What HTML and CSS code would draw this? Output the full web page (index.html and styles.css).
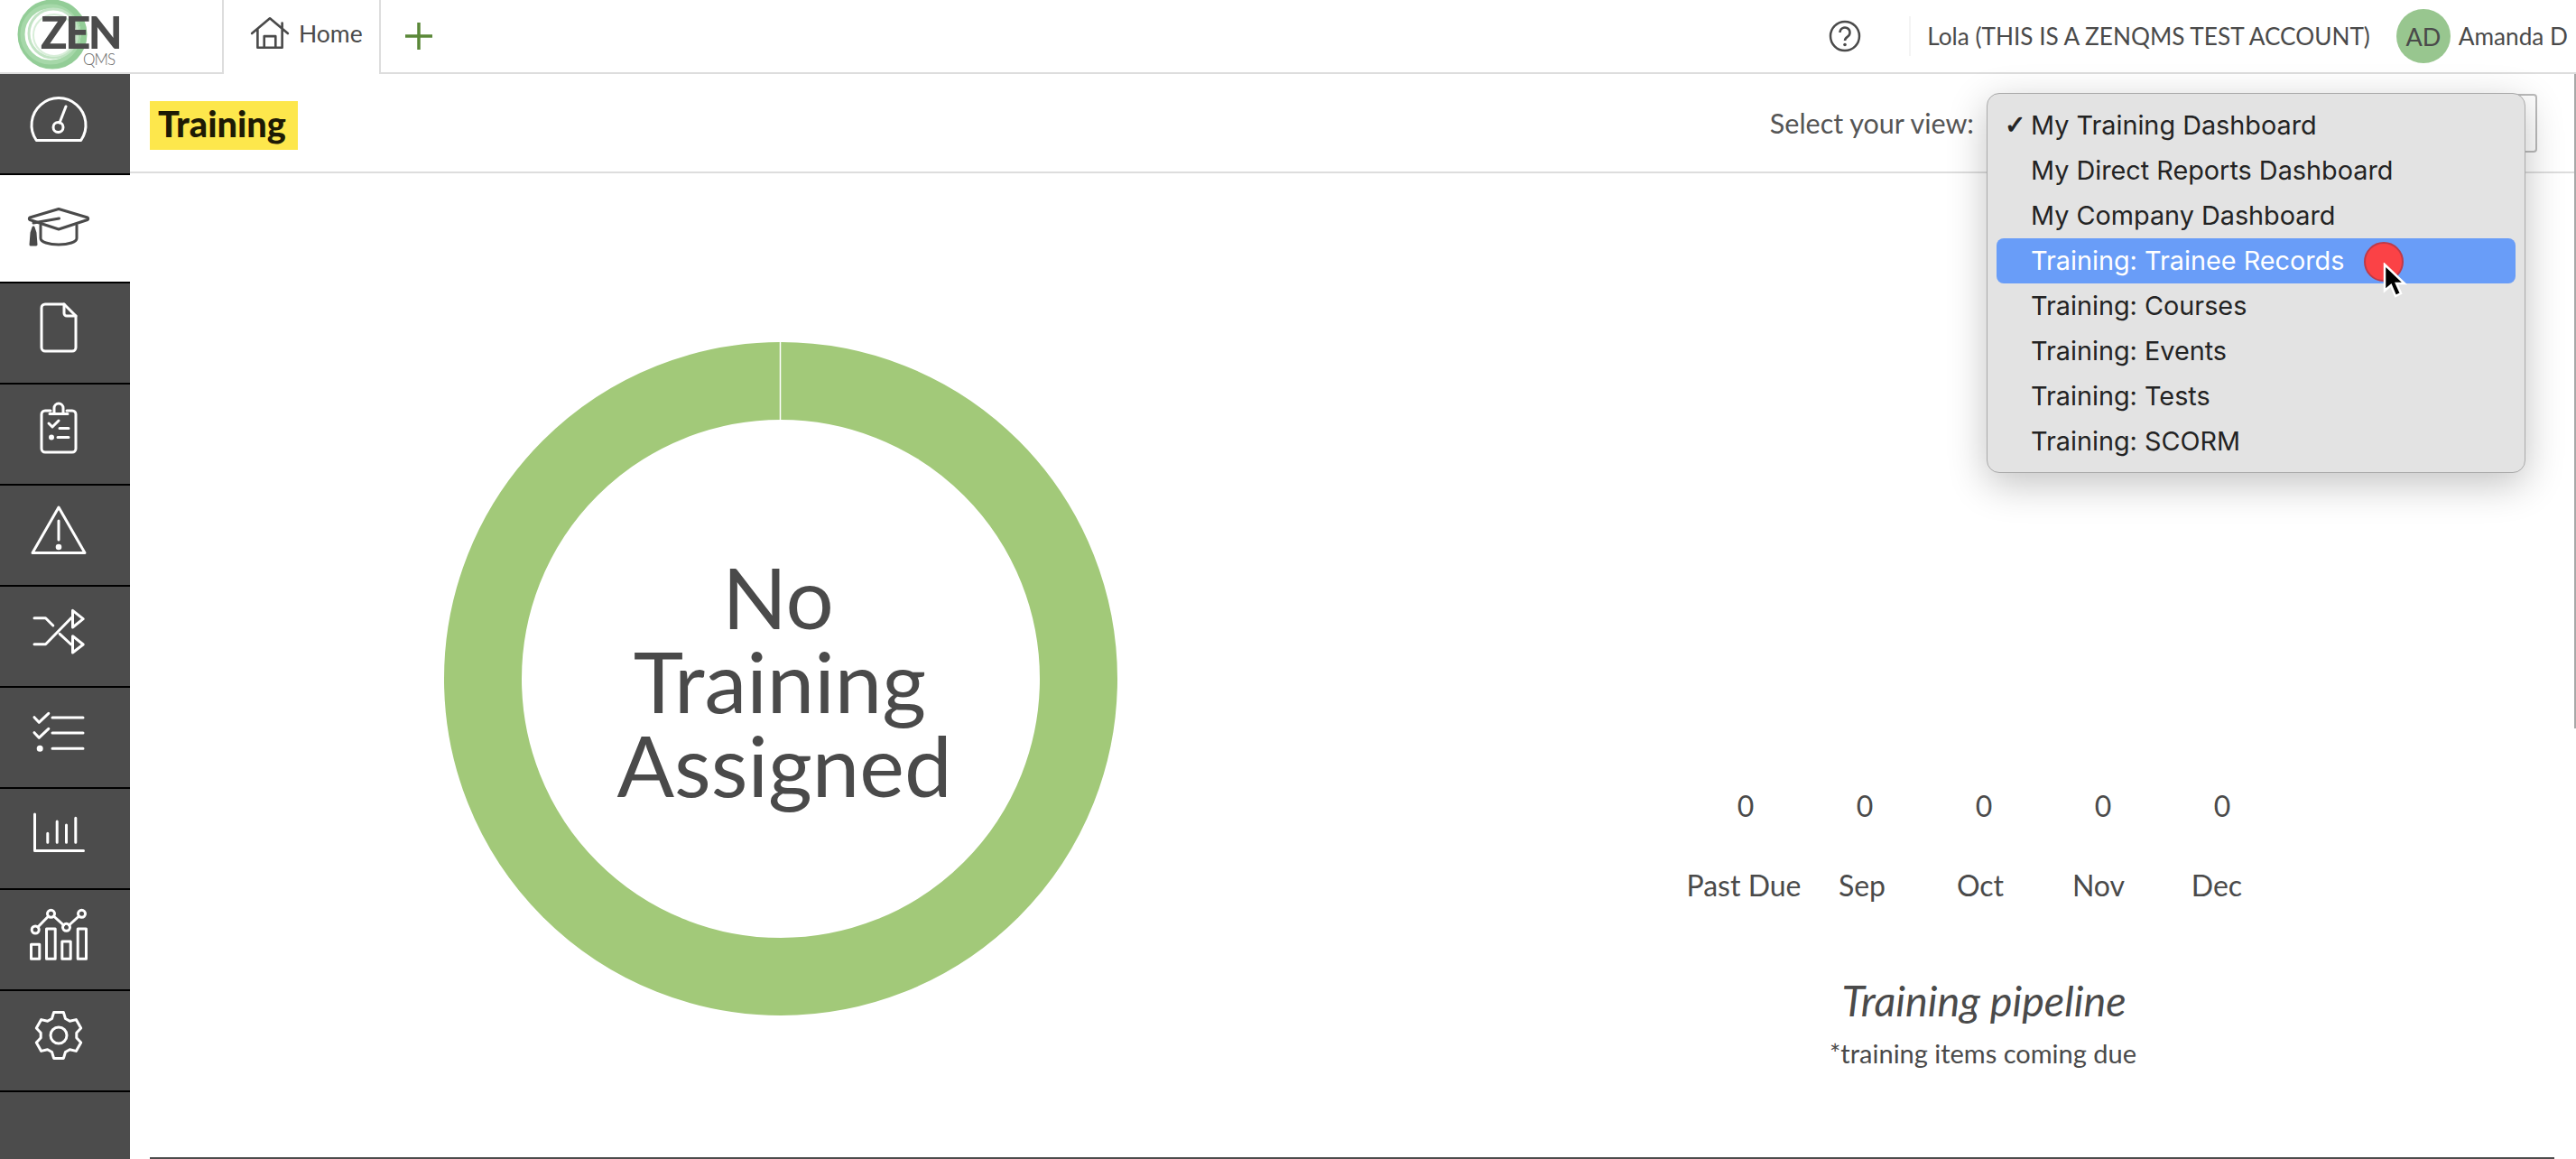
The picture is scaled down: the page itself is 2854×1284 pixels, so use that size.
FILE: index.html
```html
<!doctype html>
<html lang="en">

<head>
    <meta charset="utf-8">
    <title>ZenQMS Training</title>
    <link rel="stylesheet" href="styles.css">
</head>

<body>
    <header class="topbar">
        <div class="logo-cell">
            <div class="logo">
                <svg class="logo-ring" width="100" height="80" viewBox="0 0 100 80">
                    <circle cx="58" cy="38" r="35" fill="none" stroke="#93cd97" stroke-width="7"/>
                    <circle cx="56" cy="38" r="31" fill="none" stroke="#a6d8a9" stroke-width="5"/>
                    <circle cx="59" cy="37" r="27" fill="none" stroke="#c2e3c4" stroke-width="3"/>
                    <circle cx="60" cy="39" r="23" fill="none" stroke="#d8eed9" stroke-width="2"/>
                </svg>
                <span class="logo-zen">ZEN</span>
                <span class="logo-qms">QMS</span>
            </div>
        </div>
        <div class="home-tab">
            <svg width="44" height="40" viewBox="0 0 42 38" class="home-icon">
                <path d="M2 19 21 3l19 16M34 8v6M8 15v19h26V15M15 34V22h12v12"/>
            </svg>
            <span>Home</span>
        </div>
        <div class="top-rest">
            <button class="add-tab">
                <svg width="30" height="30" viewBox="0 0 30 30"><path d="M15 0v30M0 15h30"/></svg>
            </button>
            <div class="top-right">
                <svg class="help-icon" width="36" height="36" viewBox="0 0 36 36">
                    <circle cx="18" cy="18" r="16"/>
                    <path d="M12.500 14a5.500 5.500 0 1 1 8.500 4.600c-2 1.300-3 2.200-3 4.400"/>
                    <circle class="help-dot" cx="18" cy="27.500" r="1.800"/>
                </svg>
                <div class="top-divider"></div>
                <span class="account-name">Lola (THIS IS A ZENQMS TEST ACCOUNT)</span>
                <span class="avatar">AD</span>
                <span class="user-name">Amanda D</span>
            </div>
        </div>
    </header>

    <div class="page">
        <nav class="sidebar">
            <a class="nav-item">
                <svg class="nav-icon" viewBox="0 0 72 72">
                    <path d="M11.300 60.500A30 30 0 1 1 60.700 60.500Z"/>
                    <circle cx="35.500" cy="46" r="5.500"/>
                    <path d="M37 41l7-18"/>
                </svg>
            </a>
            <a class="nav-item active">
                <svg class="nav-icon" viewBox="0 0 72 72">
                    <path d="M36 16.500 68 26a1.500 1.500 0 0 1 0 2.500L36 39 4 28.500a1.500 1.500 0 0 1 0-2.500Z"/>
                    <path d="M16 34.500V49c0 4 9 7 20 7s20-3 20-7V34.500"/>
                    <path d="M8 32l28.500-5"/>
                    <path class="solid" d="M8 37l2 6 1 13H5l1-13Z"/>
                </svg>
            </a>
            <a class="nav-item">
                <svg class="nav-icon" viewBox="0 0 72 72">
                    <path d="M21 10h21l13 13v35a4 4 0 0 1-4 4H21a4 4 0 0 1-4-4V14a4 4 0 0 1 4-4Z"/>
                    <path d="M42 10v10a3 3 0 0 0 3 3h10"/>
                </svg>
            </a>
            <a class="nav-item">
                <svg class="nav-icon" viewBox="0 0 72 72">
                    <path d="M27 16h-6a4 4 0 0 0-4 4v38a4 4 0 0 0 4 4h30a4 4 0 0 0 4-4V20a4 4 0 0 0-4-4h-6"/>
                    <path d="M26 19.500h20M31 19v-6a5 5 0 0 1 10 0v6"/>
                    <path d="M25 30l4 4 7-7M37 35.500h10M35 45.500h12"/>
                    <circle class="solid" cx="28" cy="45.500" r="1.500"/>
                </svg>
            </a>
            <a class="nav-item">
                <svg class="nav-icon" viewBox="0 0 72 72">
                    <path d="M36 11 65 61.500H7Z"/>
                    <path d="M36 26v21"/>
                    <circle class="solid" cx="36" cy="55" r="1.800"/>
                </svg>
            </a>
            <a class="nav-item">
                <svg class="nav-icon" viewBox="0 0 72 72">
                    <path d="M9 21.700h12.500l8.300 8.300M9 50.700h12.500l28.300-29M37.200 39.300 49.800 51"/>
                    <path d="M51.500 13.300 63.200 22.700 51.500 32Z"/>
                    <path d="M51.500 41.700 63.200 51 51.500 60Z"/>
                </svg>
            </a>
            <a class="nav-item">
                <svg class="nav-icon" viewBox="0 0 72 72">
                    <path d="M29 20h34M29 37h34M29 54.300h34"/>
                    <path d="M9 19.700l5.200 5.600 10.600-10M9 36.700l5.200 5.600 10.600-10"/>
                    <circle class="solid" cx="15.200" cy="54.300" r="2"/>
                </svg>
            </a>
            <a class="nav-item">
                <svg class="nav-icon" viewBox="0 0 72 72">
                    <path d="M9.500 15v40.500h54"/>
                    <path d="M23.800 46.300v-10M34.200 46.300V23M44.500 46.300V27M54.800 46.300V19.300"/>
                </svg>
            </a>
            <a class="nav-item">
                <svg class="nav-icon" viewBox="0 0 72 72">
                    <path d="M5.500 47.300h9.300v16H5.500ZM22.500 30h9.700v33.300h-9.700ZM39.800 44h9.400v19.300h-9.400ZM57.200 30h9.300v33.300h-9.300Z"/>
                    <path d="M13 28l11.700-12M30.500 16l11 10M47.500 26l11-10"/>
                    <circle cx="10.200" cy="31" r="4"/>
                    <circle cx="27.500" cy="13.300" r="4"/>
                    <circle cx="44.500" cy="28.300" r="4"/>
                    <circle cx="61.500" cy="13.300" r="4"/>
                </svg>
            </a>
            <a class="nav-item">
                <svg class="nav-icon" viewBox="0 0 72 72">
                    <path d="M28.500 17.500 30.600 10.600H41.400L43.500 17.500 48.300 20.200 55.300 18.600 60.700 28 55.800 33.200V38.800L60.700 44 55.300 53.400 48.300 51.800 43.500 54.500 41.400 61.400H30.600L28.500 54.500 23.700 51.800 16.700 53.400 11.300 44 16.200 38.800V33.200L11.300 28 16.700 18.600 23.700 20.200Z"/>
                    <circle cx="36" cy="36" r="9"/>
                </svg>
            </a>
            <div class="nav-fill"></div>
        </nav>

        <main class="content">
            <div class="content-head">
                <h1 class="page-title">Training</h1>
                <div class="view-picker">
                    <label class="view-label">Select your view:</label>
                    <div class="view-select"></div>
                </div>
            </div>

            <div class="dashboard">
                <section class="donut-panel">
                    <div class="donut">
                        <svg width="746" height="746" viewBox="0 0 746 746">
                            <circle class="donut-ring" cx="373" cy="373" r="330"/>
                            <path class="donut-gap" d="M372.500 0v86"/>
                        </svg>
                        <div class="donut-text">
                            <div class="line-no">No</div>
                            <div class="line-training">Training</div>
                            <div class="line-assigned">Assigned</div>
                        </div>
                    </div>
                </section>

                <section class="pipeline">
                    <div class="pipeline-counts">
                        <span>0</span><span>0</span><span>0</span><span>0</span><span>0</span>
                    </div>
                    <div class="pipeline-labels">
                        <span>Past Due</span><span>Sep</span><span>Oct</span><span>Nov</span><span>Dec</span>
                    </div>
                    <h2 class="pipeline-title">Training pipeline</h2>
                    <p class="pipeline-note">*training items coming due</p>
                </section>
            </div>

            <div class="bottom-rule"></div>
        </main>
        <div class="scroll-track"><div class="scroll-thumb"></div></div>
    </div>

    <!-- open native select menu -->
    <ul class="view-menu">
        <li class="checked">My Training Dashboard</li>
        <li>My Direct Reports Dashboard</li>
        <li>My Company Dashboard</li>
        <li class="hover">Training: Trainee Records</li>
        <li>Training: Courses</li>
        <li>Training: Events</li>
        <li>Training: Tests</li>
        <li>Training: SCORM</li>
    </ul>
    <div class="click-dot"></div>
    <svg class="cursor" width="30" height="42" viewBox="0 0 30 42">
        <path d="M3 2v29l7-6 5 12 6-3-5-11h9Z"/>
    </svg>
</body>

</html>
```

FILE: styles.css
```css
* {
    box-sizing: border-box;
}

html,
body {
    margin: 0;
    height: 1284px;
    overflow: hidden;
}

body {
    position: relative;
    font-family: "Lato", "Liberation Sans", sans-serif;
    color: #4a4a4a;
    background: #fff;
}

/* top bar */
.topbar {
    display: flex;
    height: 82px;
}

.logo-cell {
    width: 246px;
    border-bottom: 2px solid #ddd;
}

.logo {
    position: relative;
    width: 140px;
    height: 80px;
    overflow: hidden;
}

.logo-ring {
    position: absolute;
    left: 0;
    top: 0;
}

.logo-zen {
    position: absolute;
    left: 45px;
    top: 17px;
    font-size: 49px;
    line-height: 36px;
    font-weight: 900;
    letter-spacing: -2.500px;
    color: #4c4c4c;
}

.logo-qms {
    position: absolute;
    left: 92px;
    top: 59px;
    font-size: 17px;
    line-height: 14px;
    font-weight: 300;
    letter-spacing: -1px;
    color: #666;
}

.home-tab {
    display: flex;
    align-items: center;
    width: 176px;
    padding: 0 0 8px 29px;
    gap: 10px;
    border-left: 2px solid #ddd;
    border-right: 2px solid #ddd;
    font-size: 26.500px;
}

.home-icon path {
    fill: none;
    stroke: #4a4a4a;
    stroke-width: 2.500;
    stroke-linejoin: round;
    stroke-linecap: round;
}

.top-rest {
    flex: 1;
    display: flex;
    align-items: center;
    justify-content: space-between;
    border-bottom: 2px solid #ddd;
}

.add-tab {
    padding: 0;
    margin-left: 27px;
    border: 0;
    background: none;
    display: flex;
}

.add-tab path {
    fill: none;
    stroke: #5a8838;
    stroke-width: 3.500;
}

.top-right {
    display: flex;
    align-items: center;
    padding-right: 9px;
    font-size: 26.200px;
}

.help-icon {
    margin-right: 53px;
}

.help-icon circle,
.help-icon path {
    fill: none;
    stroke: #4a4a4a;
    stroke-width: 2.500;
}

.help-icon .help-dot {
    fill: #4a4a4a;
    stroke: none;
}

.top-divider {
    width: 2px;
    height: 44px;
    background: #f4f4f4;
    margin-right: 18px;
}

.avatar {
    display: flex;
    align-items: center;
    justify-content: center;
    width: 60px;
    height: 60px;
    margin: 0 9px 0 29px;
    border-radius: 50%;
    background: #98c68f;
    font-size: 27px;
}

/* left navigation */
.page {
    display: flex;
    height: 1202px;
}

.sidebar {
    width: 144px;
    display: flex;
    flex-direction: column;
    flex-shrink: 0;
}

.nav-item {
    height: 112px;
    display: flex;
    align-items: center;
    justify-content: center;
    padding: 0 15px 12px 0;
    background: #4c4c4c;
    border-bottom: 2px solid #000;
}

.nav-item.active {
    height: 120px;
    padding-bottom: 4px;
    background: #fff;
}

.nav-fill {
    flex: 1;
    background: #4c4c4c;
}

.nav-icon {
    width: 72px;
    height: 72px;
    fill: none;
    stroke: #fff;
    stroke-width: 3;
    stroke-linejoin: round;
    stroke-linecap: round;
}

.nav-icon .solid {
    fill: #fff;
}

.active .nav-icon {
    stroke: #4a4a4a;
}

.active .nav-icon .solid {
    fill: #4a4a4a;
}

/* content */
.content {
    flex: 1;
    display: flex;
    flex-direction: column;
    min-width: 0;
}

.content-head {
    display: flex;
    align-items: center;
    justify-content: space-between;
    height: 110px;
    padding: 0 41px 0 22px;
    border-bottom: 2px solid #ddd;
}

.page-title {
    margin: 6px 0 0;
    padding: 0 13px 0 9px;
    height: 54px;
    line-height: 50px;
    font-size: 39.700px;
    font-weight: 900;
    color: #1d1a05;
    background: #fde74c;
}

.view-picker {
    display: flex;
    align-items: center;
    gap: 22px;
}

.view-label {
    font-size: 30.500px;
    color: #555;
}

.view-select {
    width: 602px;
    height: 65px;
    border: 2px solid #bbb;
    border-radius: 4px;
}

.dashboard {
    flex: 1;
    display: grid;
    grid-template-columns: 1442px 1224px;
}

.donut-panel {
    padding-top: 187px;
    display: flex;
    justify-content: center;
}

.donut {
    display: grid;
    place-items: center;
    width: 746px;
    height: 746px;
}

.donut svg,
.donut-text {
    grid-area: 1 / 1;
}

.donut-ring {
    fill: none;
    stroke: #a2c979;
    stroke-width: 86;
}

.donut-gap {
    fill: none;
    stroke: #fff;
    stroke-width: 1.500;
}

.donut-text {
    width: 560px;
    padding-top: 2px;
    font-size: 94px;
    line-height: 93px;
    text-align: center;
}

.line-no {
    padding-right: 6px;
}

.line-training {
    padding-right: 2px;
}

.line-assigned {
    padding-left: 8px;
}

.pipeline {
    padding-top: 681px;
    text-align: center;
}

.pipeline-counts,
.pipeline-labels {
    display: flex;
    justify-content: center;
    font-size: 32px;
    line-height: 40px;
}

.pipeline-counts span {
    width: 132px;
}

.pipeline-labels {
    margin-top: 48px;
    padding-right: 8px;
}

.pipeline-labels span {
    width: 131px;
}

.pipeline-title {
    margin: 79px 0 0;
    font-size: 46.700px;
    line-height: 56px;
    font-style: italic;
    font-weight: 400;
}

.pipeline-note {
    margin: 13px 2px 0 0;
    font-size: 29px;
    line-height: 36px;
}

.bottom-rule {
    height: 2px;
    margin: 0 22px;
    background: #4c4c4c;
}

.scroll-track {
    width: 2px;
    flex-shrink: 0;
}

.scroll-thumb {
    height: 725px;
    background: #a8a8a8;
}

/* native select menu, cursor */
.view-menu {
    position: absolute;
    left: 2201px;
    top: 103px;
    width: 597px;
    height: 421px;
    margin: 0;
    padding: 10px 10px 0;
    list-style: none;
    font-family: "Inter", "Liberation Sans", sans-serif;
    font-size: 28.800px;
    color: #232323;
    background: #e3e3e3;
    border: 1px solid #aaa;
    border-radius: 14px;
    box-shadow: 0 12px 44px rgba(0, 0, 0, .24);
}

.view-menu li {
    height: 50px;
    line-height: 50px;
    padding-left: 38px;
    border-radius: 8px;
}

.view-menu .checked {
    position: relative;
}

.view-menu .checked::before {
    content: "\2713";
    position: absolute;
    left: 9px;
    font-family: "DejaVu Sans", sans-serif;
    font-size: 28px;
    font-weight: 700;
    -webkit-text-stroke: 1px #232323;
}

.view-menu .hover {
    color: #fff;
    background: #699df8;
}

.click-dot {
    position: absolute;
    left: 2619px;
    top: 268px;
    width: 44px;
    height: 44px;
    border-radius: 50%;
    background: #fb4246;
    border: 2px solid #bf3a48;
}

.cursor {
    position: absolute;
    left: 2639px;
    top: 291px;
}

.cursor path {
    fill: #000;
    stroke: #fff;
    stroke-width: 2.500;
}
```
